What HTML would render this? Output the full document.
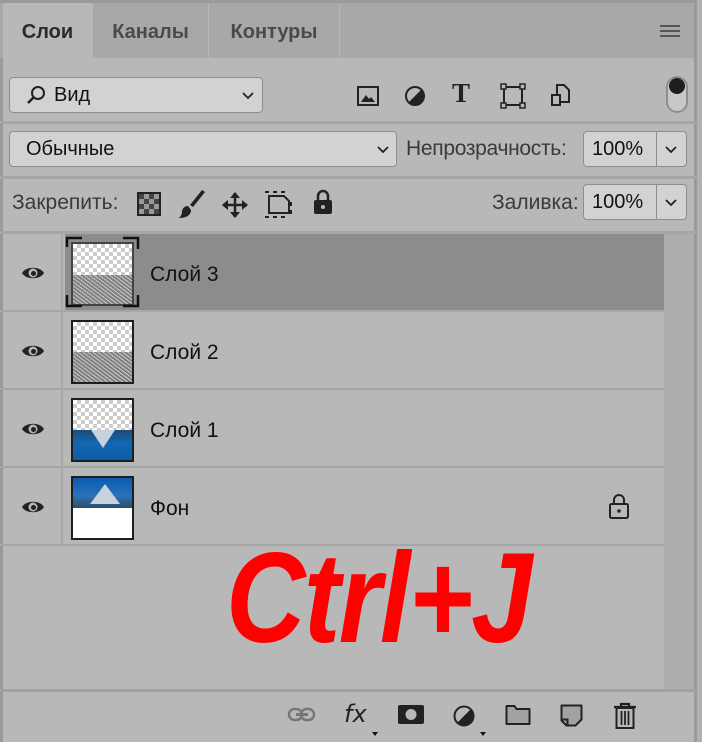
<!DOCTYPE html>
<html><head><meta charset="utf-8"><style>
*{margin:0;padding:0;box-sizing:border-box}
body{width:702px;height:742px;background:#b8b8b8;font-family:"Liberation Sans","DejaVu Sans",sans-serif;position:relative;overflow:hidden;color:#1e1e1e}
.abs{position:absolute}
.tabbar{left:0;top:0;width:702px;height:58px;background:#a8a8a8;border-top:3px solid #9a9a9a}
.tab{position:absolute;top:3px;height:55px;font-size:20px;font-weight:bold;color:#4a4a4a;line-height:58px;text-align:center;border-right:1px solid #b6b6b6}
.sel{background:#b8b8b8;color:#2a2a2a}
.box{position:absolute;background:#d2d2d2;border:1px solid #8e8e8e;border-radius:4px;font-size:20px;line-height:34px;color:#111}
.sep{position:absolute;left:0;width:697px;height:3px;background:#a6a6a6}
.lbl{position:absolute;font-size:21px;color:#3a3a3a}
.row{position:absolute;left:0;width:664px;height:78px;border-bottom:2px solid #a6a6a6}
.eyecol{position:absolute;left:0;top:0;width:63px;height:76px;border-right:2px solid #a6a6a6}
.thumb{position:absolute;left:71px;width:63px;height:64px;border:2px solid #1e1e1e;background:#fff;overflow:hidden}
.chk{background-color:#fff;background-image:linear-gradient(45deg,#ccc 25%,transparent 25%,transparent 75%,#ccc 75%),linear-gradient(45deg,#ccc 25%,transparent 25%,transparent 75%,#ccc 75%);background-size:8px 8px;background-position:0 0,4px 4px}
.noise{background:repeating-linear-gradient(37deg,#8a8a8a 0 1px,#c8c8c8 1px 2px,#777 2px 3px),#999}
.name{position:absolute;left:150px;font-size:21px;color:#111}
</style></head><body>
<div class="abs tabbar"></div>
<div class="tab sel" style="left:3px;width:90px">Слои</div>
<div class="tab" style="left:93px;width:116px">Каналы</div>
<div class="tab" style="left:209px;width:131px">Контуры</div>
<div class="abs" style="left:660px;top:25px;width:20px;height:12px;border-top:2px solid #555;border-bottom:2px solid #555"></div>
<div class="abs" style="left:660px;top:30px;width:20px;height:2px;background:#555"></div>
<div class="abs" style="left:0;top:58px;width:3px;height:684px;background:#9a9a9a"></div>
<div class="abs" style="left:694px;top:0;width:3px;height:742px;background:#999"></div>
<div class="abs" style="left:697px;top:0;width:5px;height:742px;background:#b0b0b0"></div>

<div class="box" style="left:9px;top:77px;width:254px;height:36px;padding-left:44px">Вид</div>
<svg class="abs" style="left:26px;top:85px" width="20" height="20"><circle cx="12" cy="8" r="6" fill="none" stroke="#222" stroke-width="2"/><line x1="8" y1="12" x2="2" y2="18" stroke="#222" stroke-width="2.5"/></svg>
<svg class="abs" style="left:241px;top:91px" width="14" height="9"><path d="M2 2l5 5 5-5" fill="none" stroke="#222" stroke-width="1.8"/></svg>
<svg class="abs" style="left:356px;top:84px" width="24" height="24"><rect x="2" y="3" width="20" height="18" fill="none" stroke="#222" stroke-width="2"/><path d="M5 18l5-7 3 4 2-2 4 5z" fill="#222"/></svg>
<svg class="abs" style="left:403px;top:84px" width="24" height="24"><circle cx="12" cy="12" r="9" fill="none" stroke="#222" stroke-width="2"/><path d="M18.4 5.6A9 9 0 0 1 5.6 18.4z" fill="#222"/></svg>
<div class="abs" style="left:452px;top:78px;font-family:'Liberation Serif',serif;font-weight:bold;font-size:27px;color:#222">T</div>
<svg class="abs" style="left:500px;top:83px" width="26" height="26"><rect x="4" y="4" width="18" height="18" fill="none" stroke="#222" stroke-width="2"/><g fill="#b8b8b8" stroke="#222" stroke-width="1.5"><rect x="1" y="1" width="5" height="5"/><rect x="20" y="1" width="5" height="5"/><rect x="1" y="20" width="5" height="5"/><rect x="20" y="20" width="5" height="5"/></g></svg>
<svg class="abs" style="left:548px;top:83px" width="24" height="26"><path d="M9 2h7l5 5v12h-12z" fill="none" stroke="#222" stroke-width="2"/><rect x="3" y="11" width="10" height="12" fill="#222"/><rect x="5" y="13" width="6" height="8" fill="#b8b8b8"/></svg>
<div class="abs" style="left:666px;top:76px;width:22px;height:37px;border:2px solid #8e8e8e;border-radius:11px;background:#c8c8c8"></div>
<div class="abs" style="left:669px;top:78px;width:16px;height:16px;border-radius:50%;background:#1e1e1e"></div>

<div class="sep" style="top:121px"></div>
<div class="box" style="left:9px;top:131px;width:388px;height:36px;padding-left:16px">Обычные</div>
<svg class="abs" style="left:376px;top:145px" width="14" height="9"><path d="M2 2l5 5 5-5" fill="none" stroke="#222" stroke-width="1.8"/></svg>
<div class="lbl" style="left:406px;top:137px;letter-spacing:-0.3px">Непрозрачность:</div>
<div class="box" style="left:583px;top:131px;width:104px;height:36px;padding-left:8px">100%</div>
<div class="abs" style="left:656px;top:132px;width:1px;height:34px;background:#8e8e8e"></div>
<svg class="abs" style="left:664px;top:145px" width="14" height="9"><path d="M2 2l5 5 5-5" fill="none" stroke="#222" stroke-width="1.8"/></svg>

<div class="sep" style="top:176px"></div>
<div class="lbl" style="left:12px;top:191px">Закрепить:</div>
<svg class="abs" style="left:137px;top:192px" width="24" height="24"><rect x="1" y="1" width="22" height="22" fill="#999" stroke="#222" stroke-width="2"/><g fill="#444"><rect x="2" y="2" width="5" height="5"/><rect x="12" y="2" width="5" height="5"/><rect x="7" y="7" width="5" height="5"/><rect x="17" y="7" width="5" height="5"/><rect x="2" y="12" width="5" height="5"/><rect x="12" y="12" width="5" height="5"/><rect x="7" y="17" width="5" height="5"/><rect x="17" y="17" width="5" height="5"/></g></svg>
<svg class="abs" style="left:178px;top:188px" width="28" height="32"><path d="M24 2l3 2-12 15-3-2z" fill="#222"/><path d="M10 18c-4 0-6 3-6 6 0 2-1 4-3 6 6 0 12-2 12-8z" fill="#222"/></svg>
<svg class="abs" style="left:221px;top:191px" width="28" height="28"><path d="M14 2v24M2 14h24" stroke="#222" stroke-width="2.5"/><path d="M14 1l-5 6h10zM14 27l-5-6h10zM1 14l6-5v10zM27 14l-6-5v10z" fill="#222"/></svg>
<svg class="abs" style="left:264px;top:189px" width="32" height="32"><path d="M5 7h15l5 5v12h-20z" fill="none" stroke="#222" stroke-width="2"/><path d="M1 3h4M9 3h4M17 3h4M27 13v4M27 21v4M1 28h4M9 28h4M17 28h4" stroke="#222" stroke-width="2"/></svg>
<svg class="abs" style="left:312px;top:189px" width="22" height="26"><path d="M6 11V7a5 5 0 0 1 10 0v4" fill="none" stroke="#222" stroke-width="2.5"/><rect x="2" y="11" width="18" height="14" rx="2" fill="#222"/><circle cx="11" cy="18" r="2" fill="#b8b8b8"/></svg>
<div class="lbl" style="left:492px;top:191px">Заливка:</div>
<div class="box" style="left:583px;top:184px;width:104px;height:36px;padding-left:8px">100%</div>
<div class="abs" style="left:656px;top:185px;width:1px;height:34px;background:#8e8e8e"></div>
<svg class="abs" style="left:664px;top:198px" width="14" height="9"><path d="M2 2l5 5 5-5" fill="none" stroke="#222" stroke-width="1.8"/></svg>

<div class="sep" style="top:231px"></div>
<div class="abs" style="left:664px;top:234px;width:30px;height:456px;background:#adadad"></div>

<div class="row" style="top:234px"><div class="eyecol"></div><div class="abs" style="left:65px;top:0;width:599px;height:76px;background:#8c8c8c"></div></div>
<div class="row" style="top:312px"><div class="eyecol"></div></div>
<div class="row" style="top:390px"><div class="eyecol"></div></div>
<div class="row" style="top:468px"><div class="eyecol"></div></div>

<svg width="0" height="0" style="position:absolute"><defs><g id="eye"><path d="M1 9C5 2 19 2 23 9 19 16 5 16 1 9z" fill="#222"/><circle cx="12" cy="9" r="4.5" fill="#b8b8b8"/><circle cx="12.5" cy="9.5" r="2.5" fill="#222"/></g></defs></svg>
<svg class="abs" style="left:21px;top:264px" width="24" height="18"><use href="#eye"/></svg>
<svg class="abs" style="left:21px;top:342px" width="24" height="18"><use href="#eye"/></svg>
<svg class="abs" style="left:21px;top:420px" width="24" height="18"><use href="#eye"/></svg>
<svg class="abs" style="left:21px;top:498px" width="24" height="18"><use href="#eye"/></svg>

<div class="thumb" style="top:242px;border-color:#444"><div class="chk" style="height:31px"></div><div class="noise" style="height:31px"></div></div>
<svg class="abs" style="left:65px;top:236px" width="75" height="72"><path d="M2 11V2h15M58 2h15v11M2 59v11h15M58 70h15V59" fill="none" stroke="#111" stroke-width="2.5"/></svg>
<div class="thumb" style="top:320px"><div class="chk" style="height:30px"></div><div class="noise" style="height:32px"></div></div>
<div class="thumb" style="top:398px"><div class="chk" style="height:30px"></div><div style="height:32px;background:linear-gradient(180deg,#1c4a7a 0,#1467b0 40%,#0b5aa8 100%);position:relative"><div style="position:absolute;left:18px;top:0;width:0;height:0;border-left:12px solid transparent;border-right:12px solid transparent;border-top:18px solid #c8d2dc"></div></div></div>
<div class="thumb" style="top:476px"><div style="height:30px;background:linear-gradient(180deg,#0a5bb0,#2a72b8 60%,#2f4d66);position:relative"><div style="position:absolute;left:17px;top:6px;width:0;height:0;border-left:15px solid transparent;border-right:15px solid transparent;border-bottom:20px solid #c8d2dc"></div></div><div style="height:32px;background:#fff"></div></div>

<div class="name" style="top:263px">Слой 3</div>
<div class="name" style="top:341px">Слой 2</div>
<div class="name" style="top:419px">Слой 1</div>
<div class="name" style="top:497px">Фон</div>
<svg class="abs" style="left:608px;top:493px" width="22" height="28"><path d="M6 11V7a5 5 0 0 1 10 0v4" fill="none" stroke="#222" stroke-width="2"/><rect x="2" y="11" width="18" height="14" rx="1.5" fill="none" stroke="#222" stroke-width="2"/><circle cx="11" cy="18" r="1.8" fill="#222"/></svg>

<div class="abs" style="left:226px;top:524px;font-size:128px;font-weight:bold;font-style:italic;color:#ff0000;letter-spacing:-2px;line-height:150px;font-family:'Liberation Sans',sans-serif;transform:scaleX(0.86);transform-origin:0 0;white-space:nowrap">Ctrl+J</div>

<div class="abs" style="left:0;top:689px;width:697px;height:3px;background:#a2a2a2"></div>
<svg class="abs" style="left:287px;top:706px" width="30" height="18"><rect x="2" y="3" width="13" height="11" rx="5.5" fill="none" stroke="#777" stroke-width="2.5"/><rect x="14" y="3" width="13" height="11" rx="5.5" fill="none" stroke="#777" stroke-width="2.5"/><line x1="9" y1="8.5" x2="21" y2="8.5" stroke="#777" stroke-width="3"/></svg>
<div class="abs" style="left:344px;top:700px;font-size:24px;font-style:italic;color:#222;font-family:'DejaVu Sans',sans-serif">fx</div>
<div class="abs" style="left:372px;top:732px;width:0;height:0;border-left:3px solid transparent;border-right:3px solid transparent;border-top:4px solid #111"></div>
<svg class="abs" style="left:397px;top:704px" width="28" height="22"><rect x="1" y="1" width="26" height="19" rx="2" fill="#222"/><circle cx="14" cy="10.5" r="5.5" fill="#b8b8b8"/></svg>
<svg class="abs" style="left:452px;top:704px" width="24" height="24"><circle cx="12" cy="12" r="9.5" fill="none" stroke="#222" stroke-width="2"/><path d="M18.7 5.3A9.5 9.5 0 0 1 5.3 18.7z" fill="#222"/></svg>
<div class="abs" style="left:480px;top:732px;width:0;height:0;border-left:3px solid transparent;border-right:3px solid transparent;border-top:4px solid #111"></div>
<svg class="abs" style="left:505px;top:704px" width="26" height="22"><path d="M1.5 2h8l2 3h13v15h-23z" fill="#a2a2a2" stroke="#222" stroke-width="2" stroke-linejoin="round"/></svg>
<svg class="abs" style="left:560px;top:704px" width="24" height="24"><path d="M1.5 1.5h20v14l-6 6h-9l-5-5z" fill="#a2a2a2" stroke="#222" stroke-width="2" stroke-linejoin="round"/><path d="M1.5 15.5h6v6" fill="none" stroke="#222" stroke-width="2"/></svg>
<svg class="abs" style="left:613px;top:702px" width="24" height="27"><path d="M8 4V2h8v2M1 5h22" fill="none" stroke="#222" stroke-width="2.2"/><path d="M3.5 6h17v20h-17z" fill="none" stroke="#222" stroke-width="2"/><path d="M8.5 9v14M12 9v14M15.5 9v14" stroke="#222" stroke-width="1.8"/></svg>
</body></html>
